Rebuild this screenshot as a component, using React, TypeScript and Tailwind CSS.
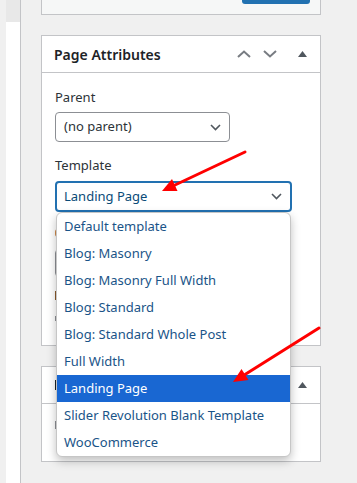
const templates = [
  "Default template",
  "Blog: Masonry",
  "Blog: Masonry Full Width",
  "Blog: Standard",
  "Blog: Standard Whole Post",
  "Full Width",
  "Landing Page",
  "Slider Revolution Blank Template",
  "WooCommerce",
];

function Chevron({ up = false }: { up?: boolean }) {
  return (
    <svg width="14" height="8" viewBox="0 0 14 8" fill="none">
      <path
        d={up ? "M1 7L7 1.5L13 7" : "M1 1L7 6.5L13 1"}
        stroke="#787c82"
        strokeWidth="2"
      />
    </svg>
  );
}

function Caret() {
  return (
    <svg width="9" height="6" viewBox="0 0 9 6">
      <path d="M4.5 0L9 6H0Z" fill="#50575e" />
    </svg>
  );
}

function SelectArrow() {
  return (
    <svg width="11" height="7" viewBox="0 0 11 7" fill="none">
      <path d="M1 1L5.5 5.5L10 1" stroke="#50575e" strokeWidth="1.6" />
    </svg>
  );
}

export default function App() {
  return (
    <div
      className="relative w-[357px] h-[483px] overflow-hidden flex bg-[#f0f0f0] text-[13px] text-[#2c3338]"
      style={{ fontFamily: '"Noto Sans", "Open Sans", sans-serif' }}
    >
      {/* left rail */}
      <div className="w-[6px] bg-[#f0f0f0]" />
      <div className="w-[14px] bg-white">
        <div className="h-[22px] bg-[#e8e8e8]" />
      </div>
      <div className="w-px bg-[#c3c4c7]" />

      <div className="flex flex-col pl-[20px]">
        {/* previous box */}
        <div className="w-[280px] h-[15px] border border-t-0 border-[#c3c4c7] bg-[#f6f7f7]">
          <div className="ml-auto mr-[10px] w-[68px] h-[4px] rounded-b-[3px] bg-[#2271b1]" />
        </div>

        {/* Page Attributes */}
        <div className="mt-[20px] w-[280px] h-[311px] border border-[#c3c4c7] bg-white">
          <div className="h-[37px] border-b border-[#c3c4c7] flex items-center pl-[12px] pr-[12px]">
            <span className="text-[14px] font-semibold text-[#1d2327]">Page Attributes</span>
            <div className="ml-auto flex items-center">
              <Chevron up />
              <div className="ml-[12px]">
                <Chevron />
              </div>
              <div className="ml-[21px] mr-[1px]">
                <Caret />
              </div>
            </div>
          </div>
          <div className="pl-[13px] pt-[14px]">
            <div className="leading-[20px]">Parent</div>
            <div className="mt-[5px] w-[175px] h-[30px] rounded-[4px] border border-[#8c8f94] flex items-center pl-[8px] pr-[8px]">
              <span>(no parent)</span>
              <span className="ml-auto">
                <SelectArrow />
              </span>
            </div>
            <div className="mt-[13px] leading-[20px]">Template</div>
            <div className="mt-[6px] w-[237px] h-[31px] rounded-[4px] border-2 border-[#2271b1] flex items-center pl-[7px] pr-[8px] text-[#0a4b78]">
              <span>Landing Page</span>
              <span className="ml-auto">
                <SelectArrow />
              </span>
            </div>
            {/* fields hidden under the open list, only their left edge shows */}
            <div className="mt-[17px] w-[3px] h-[8px] rounded-l-full bg-[#d08a4a]" />
            <div className="mt-[12px] w-[80px] h-[28px] rounded-[4px] border border-[#8c8f94]" />
            <div className="mt-[14px] w-[2px] h-[9px] bg-[#8a5a2b]" />
            <div className="mt-[16px] w-[2px] h-[5px] bg-[#8c8f94]" />
          </div>
        </div>

        {/* second box, mostly covered */}
        <div className="mt-[20px] w-[280px] h-[96px] border border-[#c3c4c7] bg-white">
          <div className="h-[37px] border-b border-[#c3c4c7] flex items-center pl-[13px] pr-[12px]">
            <div className="w-[2px] h-[10px] bg-[#1d2327]" />
            <div className="ml-auto mr-[1px]">
              <Caret />
            </div>
          </div>
          <div className="pl-[13px] pt-[17px]">
            <div className="w-[2px] h-[8px] bg-[#8c8f94]" />
          </div>
        </div>
      </div>

      {/* open dropdown list */}
      <div className="absolute left-[56px] top-[212px] w-[235px] rounded-[6px] border border-[#c6c6c6] bg-white overflow-hidden shadow-[0_4px_10px_rgba(0,0,0,0.25)]">
        {templates.map((t) => (
          <div
            key={t}
            className={
              t === "Landing Page"
                ? "h-[27px] flex items-center pl-[7px] bg-[#1967d2] text-white"
                : "h-[27px] flex items-center pl-[7px] text-[#1a5488]"
            }
          >
            {t}
          </div>
        ))}
      </div>

      {/* red arrows */}
      <svg className="absolute left-0 top-0" width="357" height="483" viewBox="0 0 357 483">
        <line x1="245" y1="152" x2="175" y2="185" stroke="#ff0000" strokeWidth="3" strokeLinecap="round" />
        <polygon points="162,191 177.5,191 172,179" fill="#ff0000" />
        <line x1="319" y1="328" x2="245" y2="374.5" stroke="#ff0000" strokeWidth="3" strokeLinecap="round" />
        <polygon points="233,382 248.5,380 241.5,369" fill="#ff0000" />
      </svg>
    </div>
  );
}
